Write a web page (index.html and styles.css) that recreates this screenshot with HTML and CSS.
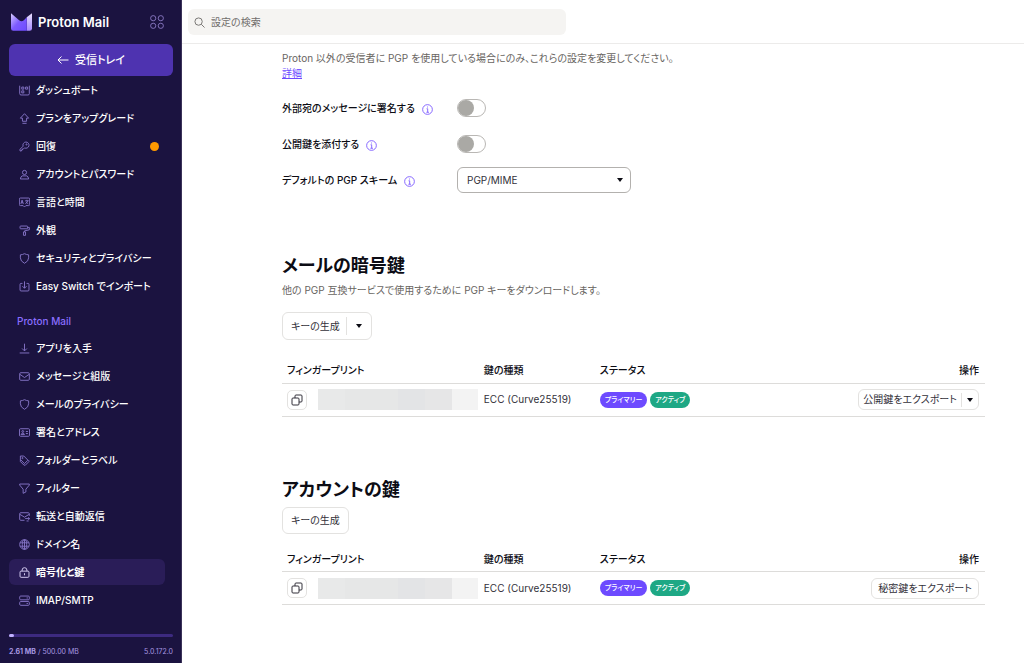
FILE: index.html
```html
<!DOCTYPE html>
<html lang="ja">
<head>
<meta charset="utf-8">
<meta name="viewport" content="width=device-width, initial-scale=1">
<title>暗号化と鍵 | Proton Mail</title>
<link rel="stylesheet" href="styles.css">
</head>
<body>
<div class="app">
  <aside class="sidebar">
    <div class="brand">
      <a class="brand-link" href="#home">
        <svg class="brand-mark" viewBox="0 0 36 30" aria-hidden="true">
          <defs>
            <linearGradient id="g1" x1="0" y1="0" x2="0" y2="1"><stop offset="0" stop-color="#e9e0ff"/><stop offset="1" stop-color="#a78bff"/></linearGradient>
            <linearGradient id="g2" x1="0" y1="0" x2="1" y2="1"><stop offset="0" stop-color="#d9ceff"/><stop offset=".5" stop-color="#7d5bff"/><stop offset="1" stop-color="#6d4aff"/></linearGradient>
          </defs>
          <path d="M27 7 36 0v26a4 4 0 0 1-4 4h-5z" fill="url(#g1)"/>
          <path d="M0 0l14 12q4 3 8 0l5-5v23H4a4 4 0 0 1-4-4z" fill="url(#g2)"/>
        </svg>
        <span>Proton Mail</span>
      </a>
      <button class="apps" type="button" aria-label="アプリ">
        <svg viewBox="0 0 14 14" aria-hidden="true"><circle cx="3.2" cy="3.2" r="2.6"/><circle cx="10.8" cy="3.2" r="2.6"/><circle cx="3.2" cy="10.8" r="2.6"/><circle cx="10.8" cy="10.8" r="2.6"/></svg>
      </button>
    </div>
    <a class="inbox" href="#inbox">
      <svg viewBox="0 0 12 12" aria-hidden="true"><path d="M11.500 6H1M4.500 2.500 1 6l3.500 3.500"/></svg>
      <span>受信トレイ</span>
    </a>
    <nav class="nav">
      <ul class="nav-list">
        <li><a class="nav-item" href="#dashboard"><svg viewBox="0 0 16 16"><path d="M1 1v11.500a2 2 0 0 0 2 2h10a2 2 0 0 0 2-2V1M4 3h3v3H4zM9.500 3h3v3h-3zM4 8.500h3v3H4z"/></svg><span>ダッシュボート</span></a></li>
        <li><a class="nav-item" href="#upgrade"><svg viewBox="0 0 16 16"><path d="M8 1 14 7.500h-3V12H5V7.500H2zM5 15h6"/></svg><span>プランをアップグレード</span></a></li>
        <li><a class="nav-item" href="#recovery"><svg viewBox="0 0 16 16"><path d="M10 1.500a4.500 4.500 0 1 1-2 8.500L6.500 11.500H5V13H3.500v1.500H1.500V12L6 7.500A4.500 4.500 0 0 1 10 1.500z"/><circle cx="11" cy="5" r=".8"/></svg><span>回復</span><i class="dot"></i></a></li>
        <li><a class="nav-item" href="#account"><svg viewBox="0 0 16 16"><circle cx="8" cy="5" r="3"/><path d="M4.500 10h7q2 1 2.500 4.500H2Q2.500 11 4.500 10z"/></svg><span>アカウントとパスワード</span></a></li>
        <li><a class="nav-item" href="#language"><svg viewBox="0 0 16 16"><path d="M2 1.500h12a1.500 1.500 0 0 1 1.500 1.500v8a1.500 1.500 0 0 1-1.500 1.500h-4l-2 2-2-2H2A1.500 1.500 0 0 1 .5 11V3A1.500 1.500 0 0 1 2 1.500zM2.700 10l1.800-5.500L6.300 10M3.300 8.300h2.400M9 5.500h5M11.500 4v1.500M9.500 10l3.500-4.500M10 7l3.500 3"/></svg><span>言語と時間</span></a></li>
        <li><a class="nav-item" href="#appearance"><svg viewBox="0 0 16 16"><path d="M2.500 1.500h9a1 1 0 0 1 1 1v2a1 1 0 0 1-1 1h-9a1 1 0 0 1-1-1v-2a1 1 0 0 1 1-1zM12.500 3.500h2.500V7L8 8.500V10M6.500 10h3v5h-3z"/></svg><span>外観</span></a></li>
        <li><a class="nav-item" href="#security"><svg viewBox="0 0 16 16"><path d="M8 1q3 1.500 6 1.700V7q0 5-6 8-6-3-6-8V2.700Q5 2.500 8 1z"/></svg><span>セキュリティとプライバシー</span></a></li>
        <li><a class="nav-item" href="#easy-switch"><svg viewBox="0 0 16 16"><path d="M5 3.500H3a1.500 1.500 0 0 0-1.500 1.500v8A1.500 1.500 0 0 0 3 14.500h10a1.500 1.500 0 0 0 1.500-1.500V5A1.500 1.500 0 0 0 13 3.500h-2M8 .5v10M5 7.500l3 3 3-3"/></svg><span>Easy Switch でインポート</span></a></li>
      </ul>
      <h2 class="nav-heading">Proton Mail</h2>
      <ul class="nav-list">
        <li><a class="nav-item" href="#get-apps"><svg viewBox="0 0 16 16"><path d="M8 1v10.500M4.500 8 8 11.500 11.500 8M1 14.500h14"/></svg><span>アプリを入手</span></a></li>
        <li><a class="nav-item" href="#messages"><svg viewBox="0 0 16 16"><rect x="1" y="2.500" width="14" height="11" rx="1.500"/><path d="m1.500 5 6.500 4.500L14.500 5"/></svg><span>メッセージと組版</span></a></li>
        <li><a class="nav-item" href="#privacy"><svg viewBox="0 0 16 16"><path d="M8 1q3 1.500 6 1.700V7q0 5-6 8-6-3-6-8V2.700Q5 2.500 8 1z"/></svg><span>メールのプライバシー</span></a></li>
        <li><a class="nav-item" href="#identity"><svg viewBox="0 0 16 16"><rect x=".7" y="2.500" width="14.600" height="11" rx="1.500"/><circle cx="5.500" cy="6.500" r="1.300"/><path d="M3 11q.5-2 2.500-2T8 11zM10 6.500h3M10 9.500h3"/></svg><span>署名とアドレス</span></a></li>
        <li><a class="nav-item" href="#folders"><svg viewBox="0 0 16 16"><path d="M2 1.500h5l6 6-5 5-6-6zM14 7.500l.5 2-5.500 5.500-2-.5L2 9.500v-3"/><circle cx="5" cy="4.500" r=".8"/></svg><span>フォルダーとラベル</span></a></li>
        <li><a class="nav-item" href="#filters"><svg viewBox="0 0 16 16"><path d="M1 1.500h14v1.500L10 9v4l-4 2V9L1 3z"/></svg><span>フィルター</span></a></li>
        <li><a class="nav-item" href="#forward"><svg viewBox="0 0 16 16"><path d="M8 13.500H2.500A1.500 1.500 0 0 1 1 12V4a1.500 1.500 0 0 1 1.500-1.500h11A1.500 1.500 0 0 1 15 4v3M1.500 5 8 9l6.500-4M9 11h6.500M13.500 9l2 2-2 2M11 14.500h3"/></svg><span>転送と自動返信</span></a></li>
        <li><a class="nav-item" href="#domains"><svg viewBox="0 0 16 16"><circle cx="8" cy="8" r="7"/><ellipse cx="8" cy="8" rx="3.200" ry="7"/><path d="M1.500 5.500h13M1.500 10.500h13M8 1v14"/></svg><span>ドメイン名</span></a></li>
        <li><a class="nav-item active" href="#keys" aria-current="page"><svg viewBox="0 0 16 16"><rect x="1.500" y="6" width="13" height="9" rx="1.500"/><path d="M4.500 6V4.500a3.500 3.500 0 0 1 7 0V6M8 9v3"/></svg><span>暗号化と鍵</span></a></li>
        <li><a class="nav-item" href="#imap"><svg viewBox="0 0 16 16"><rect x="1" y="1.500" width="14" height="5.500" rx="1.500"/><rect x="1" y="9.500" width="14" height="5.500" rx="1.500"/><path d="M11 4.300h2M11 12.300h2"/></svg><span>IMAP/SMTP</span></a></li>
      </ul>
    </nav>
    <footer class="storage">
      <div class="meter"><div class="meter-fill"></div></div>
      <div class="storage-text"><span><b>2.61 MB</b> / 500.00 MB</span><span>5.0.172.0</span></div>
    </footer>
  </aside>

  <div class="content">
    <header class="topbar">
      <label class="search">
        <svg viewBox="0 0 12 12" aria-hidden="true"><circle cx="5" cy="5" r="4"/><path d="m8 8 3.500 3.500"/></svg>
        <input type="search" placeholder="設定の検索" aria-label="設定の検索">
      </label>
    </header>
    <main class="main">
      <p class="note">Proton 以外の受信者に PGP を使用している場合にのみ、これらの設定を変更してください。<br><a href="#learn-more">詳細</a></p>
      <div class="settings">
        <div class="setting">
          <div class="setting-label"><label for="sign">外部宛のメッセージに署名する</label><svg class="info" viewBox="0 0 12 12"><circle cx="6" cy="6" r="5.300"/><path d="M5 5.200h1.200V9M4.800 9h2.800M6 2.800v1"/></svg></div>
          <input class="toggle" id="sign" type="checkbox">
        </div>
        <div class="setting">
          <div class="setting-label"><label for="attach">公開鍵を添付する</label><svg class="info" viewBox="0 0 12 12"><circle cx="6" cy="6" r="5.300"/><path d="M5 5.200h1.200V9M4.800 9h2.800M6 2.800v1"/></svg></div>
          <input class="toggle" id="attach" type="checkbox">
        </div>
        <div class="setting">
          <div class="setting-label"><label for="scheme">デフォルトの PGP スキーム</label><svg class="info" viewBox="0 0 12 12"><circle cx="6" cy="6" r="5.300"/><path d="M5 5.200h1.200V9M4.800 9h2.800M6 2.800v1"/></svg></div>
          <div class="select"><select id="scheme"><option>PGP/MIME</option></select><svg class="caret" viewBox="0 0 6 4"><path d="M0 0h6L3 4z"/></svg></div>
        </div>
      </div>

      <section class="mail-keys">
        <h1>メールの暗号鍵</h1>
        <p class="sub">他の PGP 互換サービスで使用するために PGP キーをダウンロードします。</p>
        <div class="split">
          <button class="split-main" type="button">キーの生成</button>
          <button class="split-more" type="button" aria-label="その他"><svg class="caret" viewBox="0 0 6 4"><path d="M0 0h6L3 4z"/></svg></button>
        </div>
        <table class="keys">
          <thead><tr><th class="c-print">フィンガープリント</th><th class="c-type">鍵の種類</th><th>ステータス</th><th class="c-action">操作</th></tr></thead>
          <tbody><tr>
            <td><div class="print"><button class="copy" type="button" aria-label="コピー"><svg viewBox="0 0 12 12"><rect x="1" y="4" width="7" height="7" rx="1"/><path d="M4 4V2a1 1 0 0 1 1-1h5a1 1 0 0 1 1 1v5a1 1 0 0 1-1 1H8"/></svg></button><span class="masked"></span></div></td>
            <td>ECC (Curve25519)</td>
            <td><div class="badges"><span class="badge primary">プライマリー</span><span class="badge live">アクティブ</span></div></td>
            <td class="c-action"><div class="split small"><button class="split-main" type="button">公開鍵をエクスポート</button><button class="split-more" type="button" aria-label="その他"><svg class="caret" viewBox="0 0 6 4"><path d="M0 0h6L3 4z"/></svg></button></div></td>
          </tr></tbody>
        </table>
      </section>

      <section class="account-keys">
        <h1>アカウントの鍵</h1>
        <button class="btn" type="button">キーの生成</button>
        <table class="keys">
          <thead><tr><th class="c-print">フィンガープリント</th><th class="c-type">鍵の種類</th><th>ステータス</th><th class="c-action">操作</th></tr></thead>
          <tbody><tr>
            <td><div class="print"><button class="copy" type="button" aria-label="コピー"><svg viewBox="0 0 12 12"><rect x="1" y="4" width="7" height="7" rx="1"/><path d="M4 4V2a1 1 0 0 1 1-1h5a1 1 0 0 1 1 1v5a1 1 0 0 1-1 1H8"/></svg></button><span class="masked"></span></div></td>
            <td>ECC (Curve25519)</td>
            <td><div class="badges"><span class="badge primary">プライマリー</span><span class="badge live">アクティブ</span></div></td>
            <td class="c-action"><button class="btn small" type="button">秘密鍵をエクスポート</button></td>
          </tr></tbody>
        </table>
      </section>
    </main>
  </div>
</div>
</body>
</html>
```
FILE: styles.css
```css
*, *::before, *::after { box-sizing: border-box; }

body {
  margin: 0;
  font: 400 10px/15px Inter, "Noto Sans CJK JP", sans-serif;
  font-feature-settings: "palt";
  color: #0c0c14;
  background: #fff;
}
button, input, select { font: inherit; font-feature-settings: inherit; color: inherit; }
button { cursor: pointer; }
h1, h2, p, ul { margin: 0; padding: 0; }
ul { list-style: none; }
a { text-decoration: none; color: inherit; }
svg { flex: none; fill: none; stroke: currentColor; }

.app { display: flex; min-height: 100vh; }

/* Sidebar */
.sidebar {
  flex: none;
  display: flex;
  flex-direction: column;
  width: 182px;
  padding: 0 8px 4px 9px;
  color: #fff;
  background: #1b1340;
  border-right: 1px solid #3b3359;
}
.brand {
  display: flex;
  align-items: center;
  justify-content: space-between;
  height: 44px;
  padding: 0 9px 0 2px;
}
.brand-link { display: flex; align-items: center; gap: 6px; font-size: 13px; font-weight: 600; }
.brand-mark { width: 21px; height: 18px; stroke: none; }
.apps { display: flex; padding: 0; border: 0; background: none; color: #8171b8; }
.apps svg { width: 14px; height: 14px; }
.inbox {
  display: flex;
  align-items: center;
  justify-content: center;
  gap: 6px;
  height: 32px;
  border-radius: 6px;
  background: #4e33b0;
  font-size: 11px;
  font-weight: 500;
}
.inbox svg { width: 12px; height: 12px; }
.nav { flex: 1; }
.nav-list li { padding: 1px 8px 1px 0; }
.nav-item {
  display: flex;
  align-items: center;
  gap: 6px;
  height: 26px;
  padding: 0 6px 0 10px;
  border-radius: 6px;
  font-weight: 500;
  white-space: nowrap;
}
.nav-item svg { width: 11px; height: 11px; color: #8373c4; stroke-width: 1.4; }
.nav-item.active { background: #2a1d58; font-weight: 700; }
.nav-item.active svg { color: #d5cdf2; }
.dot { width: 9px; height: 9px; margin-left: auto; border-radius: 50%; background: #ff9900; }
.nav-heading { margin: 8px 8px 0; font-size: 10px; line-height: 26px; font-weight: 500; color: #8a6eff; }
.storage { color: #a798e0; font-size: 7px; }
.meter { height: 3px; border-radius: 2px; background: #3d2a80; }
.meter-fill { width: 3%; height: 3px; border-radius: 2px; background: #c1b2ff; }
.storage-text { display: flex; justify-content: space-between; margin-top: 7px; }

/* Content */
.content { flex: 1; min-width: 0; }
.topbar { padding: 9px 6px 8px; border-bottom: 1px solid #ecebea; }
.search {
  display: flex;
  align-items: center;
  gap: 6px;
  width: 45.5%;
  height: 26px;
  padding: 0 6px;
  border-radius: 6px;
  background: #f5f4f2;
  color: #706d6b;
}
.search svg { width: 11px; height: 11px; }
.search input { flex: 1; min-width: 0; padding: 0; border: 0; outline: 0; background: none; }
.search input::placeholder { color: #706d6b; opacity: 1; }

.main { padding: 7px 39px 40px 100px; }
.note, .sub { color: #68655f; }
.note a { color: #6d4aff; text-decoration: underline; }
.settings { margin-top: 9px; }
.setting { display: flex; align-items: center; height: 36px; }
.setting-label { display: flex; align-items: center; gap: 7px; width: 175px; font-weight: 500; }
.info { width: 11px; height: 11px; margin-top: 2px; color: #7d5cff; }
.toggle {
  appearance: none;
  width: 29px;
  height: 18px;
  margin: 0;
  border: 1px solid #b9b7b4;
  border-radius: 9px;
  background: #fff;
}
.toggle::before { content: ""; display: block; width: 16px; height: 16px; border-radius: 50%; background: #aaa9a5; }
.toggle:checked::before { margin-left: auto; background: #6d4aff; }
.select { position: relative; width: 174px; }
.select select {
  appearance: none;
  display: block;
  width: 100%;
  height: 26px;
  padding: 0 9px;
  border: 1px solid #b3b1ae;
  border-radius: 6px;
  background: #fff;
  color: #33313a;
}
.caret { width: 6px; height: 4px; fill: #0c0c14; stroke: none; }
.select .caret { position: absolute; top: 11px; right: 8px; }

h1 { font-size: 18px; line-height: 26px; font-weight: 600; }
.mail-keys { margin-top: 55px; }
.mail-keys .sub { margin: 4px 0 14px; }
.account-keys { margin-top: 60px; }
.account-keys > .btn { margin-top: 4px; }

.split, .btn { border: 1px solid #e3e2e0; border-radius: 6px; background: #fff; color: #33313a; }
.split { display: inline-flex; align-items: center; height: 28px; }
.split button { height: 18px; border: 0; background: none; }
.split .split-main { padding: 0 6px 0 8px; }
.split .split-more { display: flex; align-items: center; padding: 0 9px; border-left: 1px solid #e3e2e0; }
.split.small { height: 21px; }
.split.small .split-main { padding: 0 4px; }
.split.small .split-more { height: 14px; padding: 0 5px; }
.btn { display: block; height: 27px; padding: 0 8px; }
.btn.small { display: inline-block; height: 21px; padding: 0 6px; }

.keys { width: 100%; table-layout: fixed; border-collapse: collapse; }
.mail-keys .keys { margin-top: 17px; }
.account-keys .keys { margin-top: 12px; }
.keys th { height: 26px; padding: 2px 5px 0; text-align: left; font-weight: 500; }
.keys td { height: 33px; padding: 0 5px; color: #33313a; vertical-align: middle; }
.keys tr { border-bottom: 1px solid #dddcda; }
.keys .c-print { width: 28%; }
.keys .c-type { width: 16.5%; }
.keys .c-action { padding-right: 6px; text-align: right; }
.keys td.c-action > * { vertical-align: middle; }
.print { display: flex; align-items: center; gap: 11px; }
.copy { display: flex; flex: none; padding: 3px; border: 1px solid #e3e2e0; border-radius: 5px; background: #fff; color: #33313a; }
.copy svg { width: 12px; height: 12px; }
.masked {
  flex: none;
  width: 160px;
  height: 21px;
  background: linear-gradient(90deg, #e8e9e9 0 17%, #e6e7e7 17% 50%, #e3e4e6 50% 67%, #e6e6e7 67% 84%, #f3f3f3 84%);
}
.badges { display: flex; gap: 3px; }
.badge { padding: 0 5px; border-radius: 8px; font-size: 7px; line-height: 16px; font-weight: 500; color: #fff; white-space: nowrap; }
.primary { background: #6d4aff; }
.live { background: #1ea885; }
```
